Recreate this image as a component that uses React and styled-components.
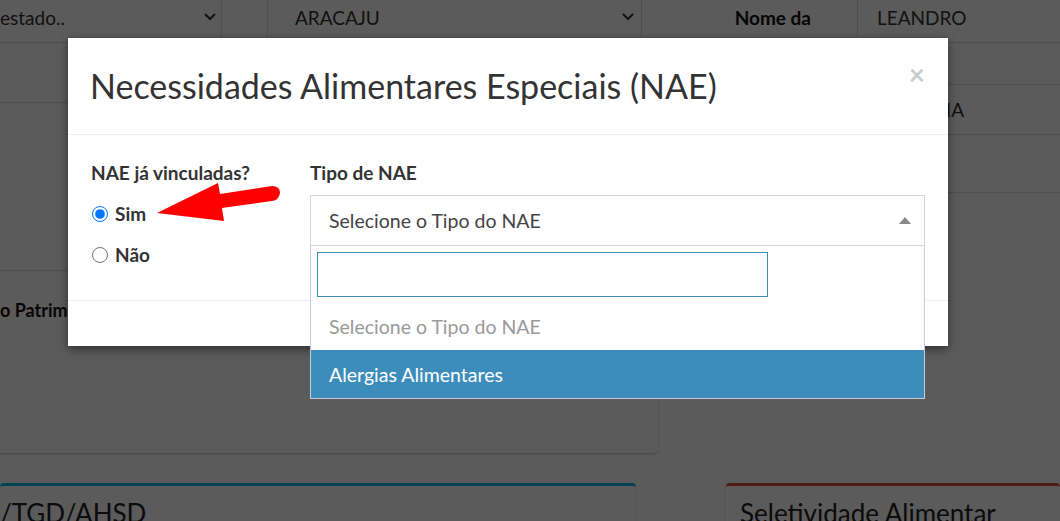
import React from "react";
import styled, { createGlobalStyle } from "styled-components";

const GlobalStyle = createGlobalStyle`
  html, body {
    margin: 0;
    padding: 0;
  }
  body {
    font-family: Lato, "Open Sans", sans-serif;
    color: #333;
    background: #fff;
    overflow: hidden;
  }
  * { box-sizing: border-box; }
`;

const Screen = styled.div`
  position: relative;
  width: 1060px;
  height: 521px;
  overflow: hidden;
  background: #fff;
`;

/* ---------- page behind the modal ---------- */

const Page = styled.div`
  display: flex;
  flex-direction: column;
  font-size: 19px;
`;

const TopRow = styled.div`
  display: flex;
  height: 43px;
  border-bottom: 1px solid #ddd;
`;

const Cell = styled.div`
  display: flex;
  align-items: flex-start;
  justify-content: ${(p) => (p.$right ? "flex-end" : "space-between")};
  width: ${(p) => (p.$w ? p.$w + "px" : "auto")};
  flex: ${(p) => (p.$w ? "none" : 1)};
  padding: 6px ${(p) => p.$pr || 0}px 0 ${(p) => p.$pl || 0}px;
  border-right: ${(p) => (p.$noLine ? "none" : "1px solid #ddd")};
  font-weight: ${(p) => (p.$bold ? 700 : 400)};
  color: ${(p) => (p.$bold ? "#111" : "#333")};

  svg {
    margin-top: 6px;
  }
`;

const Chevron = () => (
  <svg width="14" height="9" viewBox="0 0 14 9">
    <polyline points="2,2 7,7 12,2" fill="none" stroke="#333" strokeWidth="2" />
  </svg>
);

const Middle = styled.div`
  display: flex;
  height: 410px;
`;

const LeftPane = styled.div`
  width: 658px;
  display: flex;
  flex-direction: column;
`;

const LeftCard = styled.div`
  height: 410px;
  border-radius: 0 0 4px 0;
  box-shadow: 0 1px 2px rgba(0, 0, 0, 0.25);
  display: flex;
  flex-direction: column;
`;

const StripRow = styled.div`
  height: ${(p) => p.$h}px;
  border-bottom: 1px solid #ddd;
  flex: none;
`;

const Patrim = styled.div`
  margin-top: 28px;
  font-weight: 700;
  color: #111;
  font-size: 18px;
`;

const RightPane = styled.div`
  flex: 1;
  display: flex;
  flex-direction: column;
`;

const RightRow = styled.div`
  height: ${(p) => p.$h}px;
  border-bottom: 1px solid #ddd;
  display: flex;
  align-items: center;
  justify-content: flex-end;
  padding-right: 96px;
  white-space: nowrap;
`;

const Cards = styled.div`
  display: flex;
  justify-content: space-between;
  margin-top: 30px;
`;

const BoxCard = styled.div`
  width: ${(p) => p.$w}px;
  height: 60px;
  border-top: 3px solid ${(p) => p.$accent};
  border-radius: 4px 4px 0 0;
  box-shadow: 0 1px 2px rgba(0, 0, 0, 0.2);
  padding: 11px 0 0 ${(p) => p.$pl}px;
  font-size: 26px;
  margin-left: ${(p) => p.$ml || 0}px;
  color: #222;
  white-space: nowrap;
`;

const Backdrop = styled.div`
  position: absolute;
  inset: 0;
  background: rgba(0, 0, 0, 0.645);
`;

/* ---------- modal ---------- */

const Dialog = styled.div`
  position: absolute;
  top: 38px;
  left: 68px;
  width: 880px;
  background: #fff;
  box-shadow: 0 3px 9px rgba(0, 0, 0, 0.5);
`;

const Header = styled.div`
  height: 97px;
  border-bottom: 1px solid #f0f0f0;
  display: flex;
  align-items: flex-start;
  justify-content: space-between;
  padding: 27px 23px 0 22px;
`;

const Title = styled.h4`
  margin: 0;
  font-size: 34px;
  font-weight: 400;
  line-height: 42px;
  color: #333;
`;

const Close = styled.span`
  font-size: 28px;
  font-weight: 700;
  line-height: 1;
  color: #000;
  opacity: 0.2;
  margin-top: -5px;
`;

const Body = styled.div`
  height: 165px;
  padding: 27px 23px 0 23px;
  display: grid;
  grid-template-columns: 219px 1fr;
`;

const Group = styled.div`
  display: flex;
  flex-direction: column;
`;

const Label = styled.div`
  font-size: 19px;
  font-weight: 700;
  line-height: 22px;
  margin-bottom: ${(p) => p.$mb}px;
  color: #333;
  white-space: nowrap;
`;

const RadioLine = styled.label`
  display: flex;
  align-items: center;
  gap: 7px;
  height: 41px;
  font-size: 19px;
  font-weight: 700;
  color: #333;

  input {
    margin: 0 0 0 1px;
    width: 16px;
    height: 16px;
  }
`;

const SelectWrap = styled.div`
  position: relative;
`;

const SelectBox = styled.div`
  height: 51px;
  border: 1px solid #d2d6de;
  display: flex;
  align-items: center;
  justify-content: space-between;
  padding: 0 13px 0 18px;
  font-size: 19.5px;
  color: #444;
`;

const Caret = styled.span`
  width: 0;
  height: 0;
  border-style: solid;
  border-width: 0 6px 7px 6px;
  border-color: transparent transparent #888 transparent;
`;

const Dropdown = styled.div`
  position: absolute;
  top: 100%;
  left: 0;
  right: 0;
  margin-top: -1px;
  background: #fff;
  border: 1px solid #c9cbdd;
  border-top-color: #d2d6de;
  z-index: 2;
`;

const SearchField = styled.div`
  padding: 6px 6px 5px 6px;

  input {
    display: block;
    width: 451px;
    height: 45px;
    border: 1px solid #3c8dbc;
    outline: none;
    font: inherit;
  }
`;

const Option = styled.div`
  height: 48px;
  display: flex;
  align-items: center;
  padding-left: 18px;
  font-size: 19.5px;
  color: ${(p) => (p.$active ? "#fff" : "#999")};
  background: ${(p) => (p.$active ? "#3c8dbc" : "#fff")};
`;

const Footer = styled.div`
  height: 46px;
  border-top: 1px solid #eee;
`;

const Arrow = styled.svg`
  position: absolute;
  left: 150px;
  top: 180px;
  pointer-events: none;
`;

export default function App() {
  const noop = () => {};
  return (
    <Screen>
      <GlobalStyle />
      <Page>
        <TopRow>
          <Cell $w={222} $pr={4}>
            <span>estado..</span>
            <Chevron />
          </Cell>
          <Cell $w={46} />
          <Cell $w={374} $pl={27} $pr={6}>
            <span>ARACAJU</span>
            <Chevron />
          </Cell>
          <Cell $w={216} $bold $right $pr={46}>
            Nome da
          </Cell>
          <Cell $pl={19} $noLine>
            LEANDRO
          </Cell>
        </TopRow>
        <Middle>
          <LeftPane>
            <LeftCard>
              <StripRow $h={60} />
              <StripRow $h={168} />
              <Patrim>o Patrimônio</Patrim>
            </LeftCard>
          </LeftPane>
          <RightPane>
            <RightRow $h={42} />
            <RightRow $h={50}>BAHIA</RightRow>
            <RightRow $h={58} />
          </RightPane>
        </Middle>
        <Cards>
          <BoxCard $w={636} $accent="#00c0ef" $pl={0}>
            /TGD/AHSD
          </BoxCard>
          <BoxCard $w={334} $accent="#dd4b39" $pl={14}>
            Seletividade Alimentar
          </BoxCard>
        </Cards>
      </Page>

      <Backdrop />

      <Dialog>
        <Header>
          <Title>Necessidades Alimentares Especiais (NAE)</Title>
          <Close>×</Close>
        </Header>
        <Body>
          <Group>
            <Label $mb={9}>NAE já vinculadas?</Label>
            <RadioLine>
              <input type="radio" name="nae" checked onChange={noop} />
              Sim
            </RadioLine>
            <RadioLine>
              <input type="radio" name="nae" checked={false} onChange={noop} />
              Não
            </RadioLine>
          </Group>
          <Group>
            <Label $mb={11}>Tipo de NAE</Label>
            <SelectWrap>
              <SelectBox>
                <span>Selecione o Tipo do NAE</span>
                <Caret />
              </SelectBox>
              <Dropdown>
                <SearchField>
                  <input type="text" defaultValue="" />
                </SearchField>
                <Option>Selecione o Tipo do NAE</Option>
                <Option $active>Alergias Alimentares</Option>
              </Dropdown>
            </SelectWrap>
          </Group>
        </Body>
        <Footer />
      </Dialog>

      <Arrow width="140" height="50" viewBox="150 180 140 50">
        <path
          d="M157 213 L218 183 L220 194 L272 186 Q280 186 280 193 Q279 200 272 201 L222 208 L224 221 Z"
          fill="#ff0000"
        />
      </Arrow>
    </Screen>
  );
}
